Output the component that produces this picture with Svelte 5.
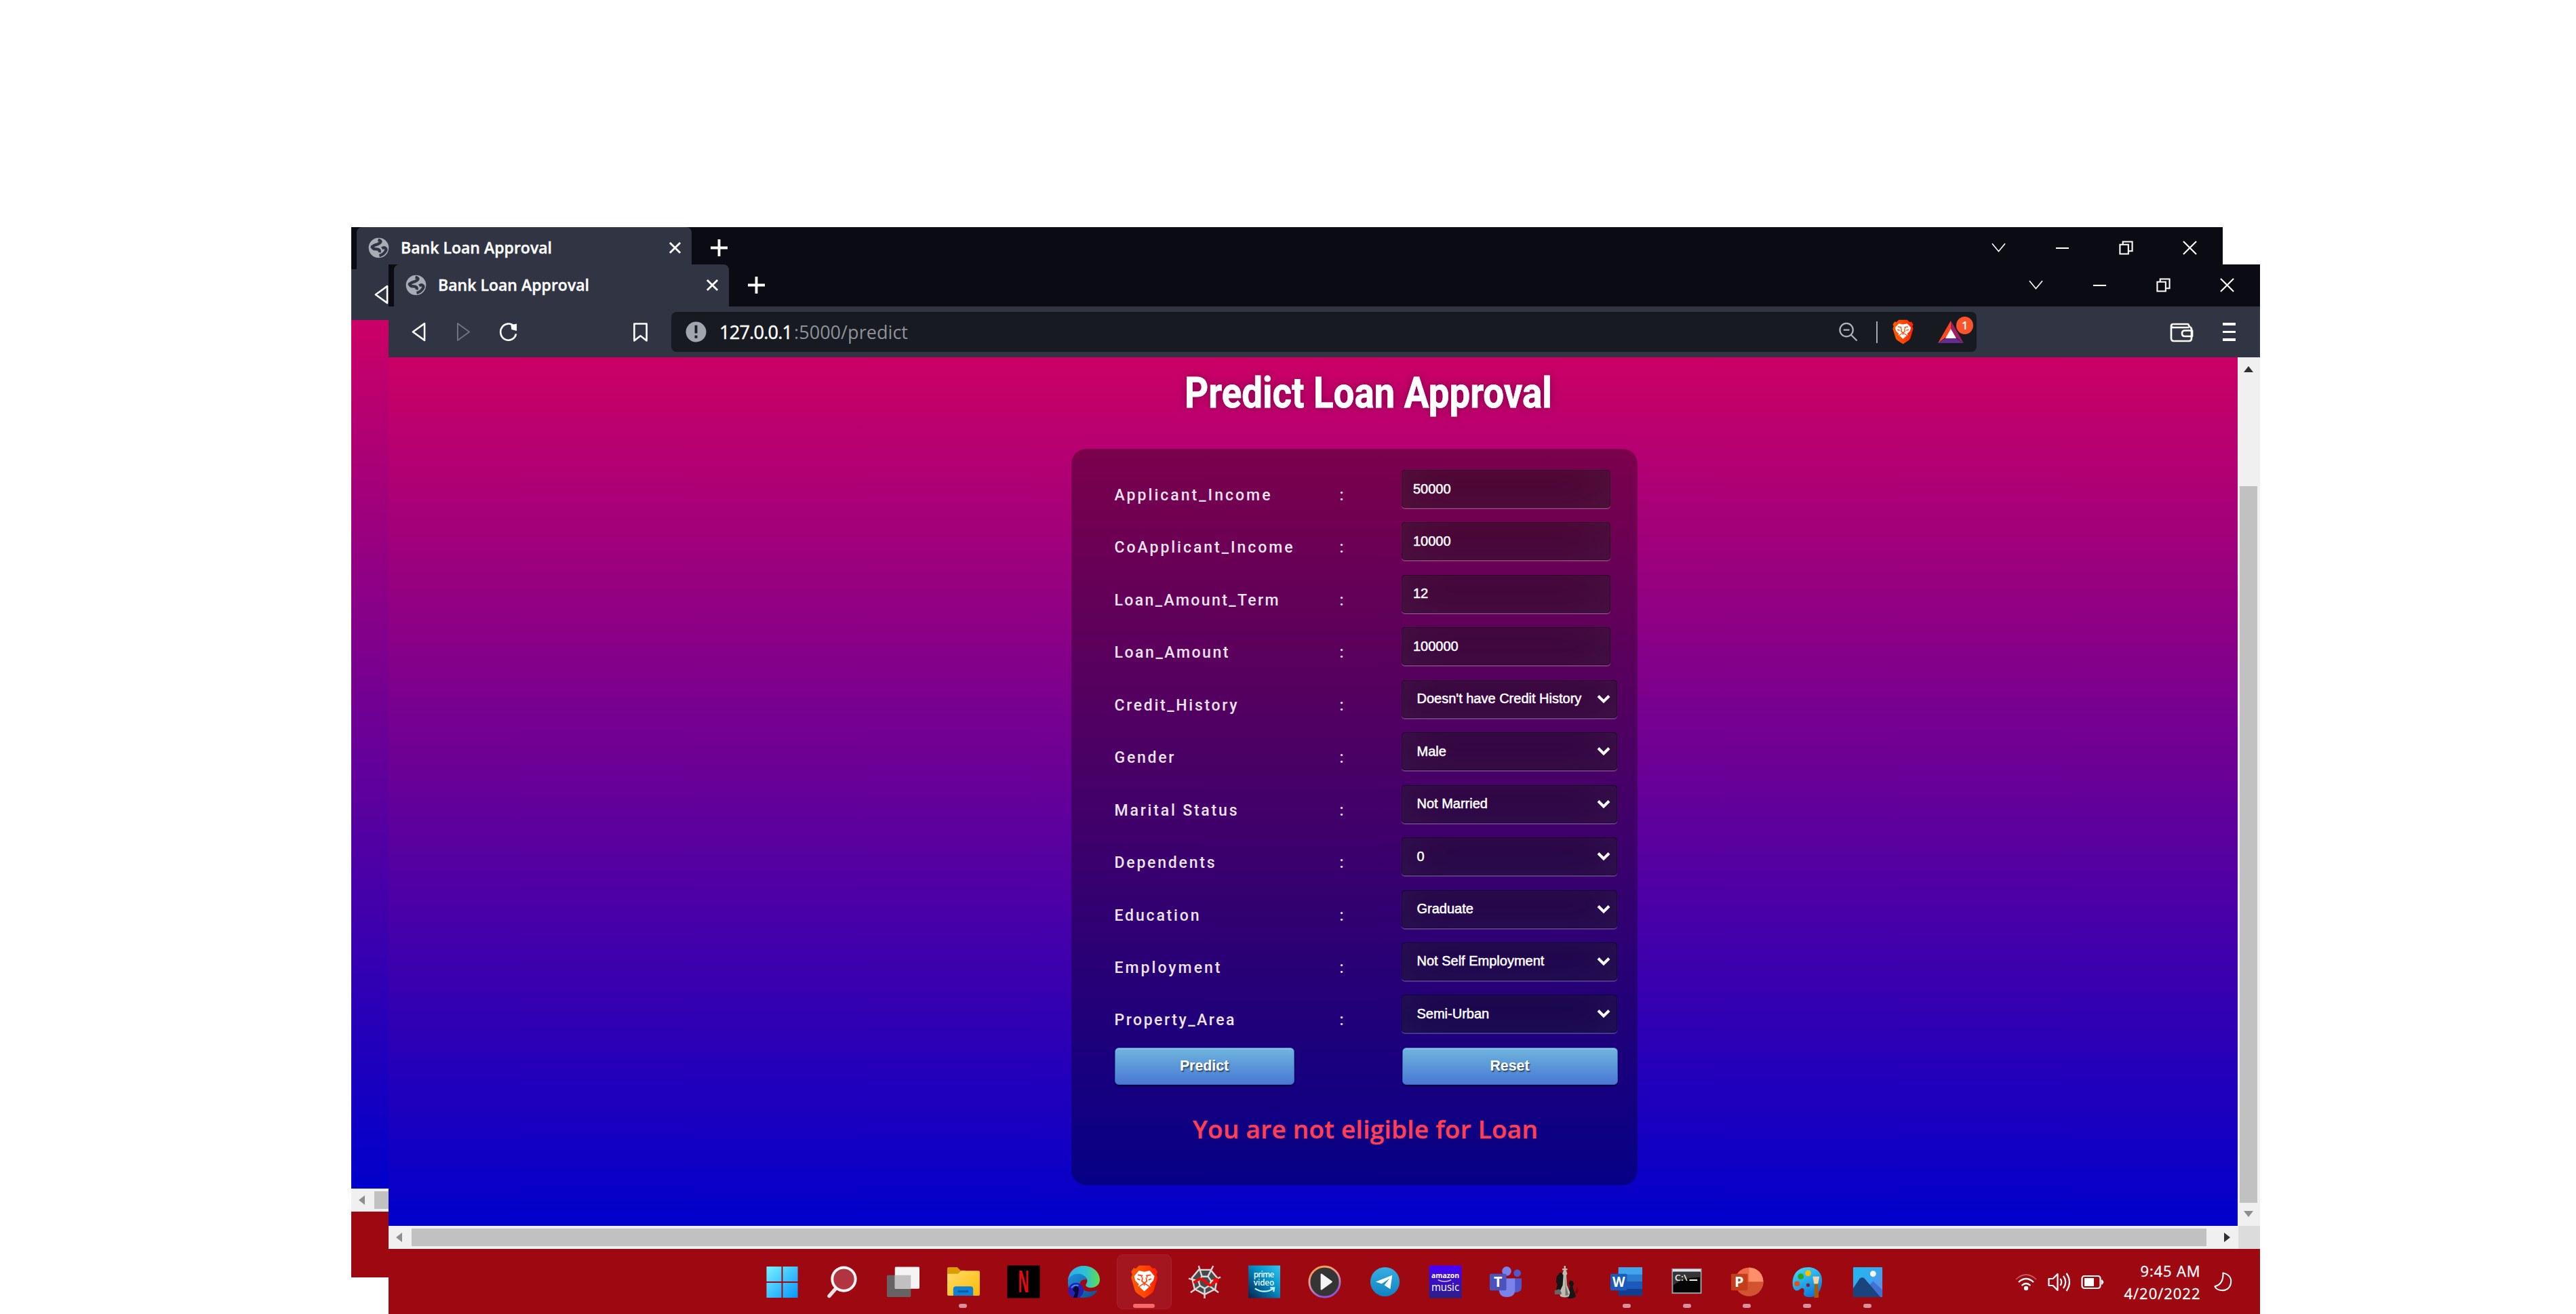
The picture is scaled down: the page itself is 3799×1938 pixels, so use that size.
<script>
  const inputs = [
    { label: 'Applicant_Income', width: 230, value: '50000' },
    { label: 'CoApplicant_Income', width: 263, value: '10000' },
    { label: 'Loan_Amount_Term', width: 242, value: '12' },
    { label: 'Loan_Amount', width: 168, value: '100000' },
    { label: 'Credit_History', width: 181, value: "Doesn't have Credit History", select: true },
    { label: 'Gender', width: 88, value: 'Male', select: true },
    { label: 'Marital Status', width: 181, value: 'Not Married', select: true },
    { label: 'Dependents', width: 148, value: '0', select: true },
    { label: 'Education', width: 125, value: 'Graduate', select: true },
    { label: 'Employment', width: 156, value: 'Not Self Employment', select: true },
    { label: 'Property_Area', width: 177, value: 'Semi-Urban', select: true }
  ];

  const apps = [
    { name: 'start' }, { name: 'search' }, { name: 'taskview' },
    { name: 'files', open: true }, { name: 'netflix' }, { name: 'edge' },
    { name: 'brave', active: true }, { name: 'spyder' }, { name: 'prime' },
    { name: 'player' }, { name: 'telegram' }, { name: 'music' },
    { name: 'teams' }, { name: 'chess' }, { name: 'word', open: true },
    { name: 'terminal', open: true }, { name: 'powerpoint', open: true },
    { name: 'paint', open: true }, { name: 'photos', open: true }
  ];

  // Tracks a line of text out to the given width, leaving no space after its last letter.
  function track(node, width) {
    const current = node.getBoundingClientRect().width;
    const spacing = (width - current) / (node.textContent.length - 1);
    node.style.letterSpacing = `${spacing}px`;
    node.style.marginRight = `${-spacing}px`;
  }

  // Condenses a line of text to the given width.
  function condense(node, width) {
    node.style.transform = `scaleX(${width / node.offsetWidth})`;
  }
</script>

{#snippet lion(id)}
  <defs>
    <linearGradient id={id}><stop offset="0" stop-color="#ff5a00" /><stop offset=".45" stop-color="#ff4a05" /><stop offset="1" stop-color="#ff1f00" /></linearGradient>
  </defs>
  <path fill="url(#{id})" d="M15 1h18l5 5 4-1 4 6-2 4 2 5-6 20c-1 3-3 4-5 6l-11 7-11-7c-2-2-4-3-5-6L2 20l2-5-2-4 4-6 4 1z" />
  <path fill="#fff" d="M15 9l9 2 9-2 8 9-2 7-6 6 2 4-11-7-11 7 2-4-6-6-2-7z" />
  <path fill="#fff" d="M24 30l8 5-8 7-8-7z" />
  <path fill="none" stroke="#ff4a10" stroke-width="2" d="M13 16l7 1-1 3m16-4l-7 1 1 3M12 22l5 2m19-2l-5 2M21 20l-1 6 4 3 4-3-1-6M24 29v4" />
{/snippet}

{#snippet titlebar()}
  <div class="titlebar">
    <div class="tab">
      <svg class="globe" viewBox="0 0 32 32"><circle cx="16" cy="16" r="15.3" fill="#a8adb5" /><path d="M15 4c5 1 5 3 2 5-4 3-7 2-9 4-3 3 0 5 4 5 5 0 6 2 5 5M21 17c4-3 7 0 6 3-2 4-6 7-10 8" fill="none" stroke="#303443" stroke-width="4.5" stroke-linejoin="round" /><path d="M4 14l4 1" stroke="#303443" stroke-width="4" /></svg>
      <span class="tab-title"><span use:track={223}>Bank Loan Approval</span></span>
      <svg class="close" viewBox="0 0 20 20"><path d="M2 2l16 16M18 2L2 18" /></svg>
    </div>
    <svg class="plus" viewBox="0 0 26 26"><path d="M13 0v26M0 13h26" /></svg>
    <div class="controls">
      <svg viewBox="0 0 22 22"><path class="thin" d="M1 4.500l10 12 10-12" /></svg>
      <svg viewBox="0 0 22 22"><path d="M1 11.500h20" /></svg>
      <svg viewBox="0 0 22 22"><path d="M1.500 6h13v14.500h-13zM6 6V1.500h14.500v14.500h-6" /></svg>
      <svg viewBox="0 0 22 22"><path d="M1 1l20 20M21 1L1 21" /></svg>
    </div>
  </div>
{/snippet}

{#snippet backIcon()}
  <svg class="back-icon" viewBox="0 0 22 30"><path d="M20 2v26L2 15z" /></svg>
{/snippet}

{#snippet appIcon(name)}
  <svg class="app-icon" viewBox="0 0 50 50">
    {#if name === 'start'}
      <defs><linearGradient id="win" x2="47" y2="47" gradientUnits="userSpaceOnUse"><stop stop-color="#7df5ff" /><stop offset="1" stop-color="#0a98ff" /></linearGradient></defs>
      <path fill="url(#win)" d="M1.500 2h22.500v22.500H1.500zM26 2h22.500v22.500H26zM1.500 26.500h22.500v22.500H1.500zM26 26.500h22.500V49H26z" />
    {:else if name === 'search'}
      <path d="M15.500 34.500L5 46.500" stroke="#e4e4e4" stroke-width="5.500" stroke-linecap="round" />
      <circle cx="27" cy="21" r="17.500" fill="#b13540" stroke="#f8f6f6" stroke-width="4" />
    {:else if name === 'taskview'}
      <rect x="1" y="15" width="36" height="33" rx="1.500" fill="#676263" />
      <rect x="13" y="2.500" width="37" height="33" rx="1.500" fill="#f4f4f4" />
      <path d="M13 15h24v20.500H13z" fill="#c1bfc0" />
    {:else if name === 'files'}
      <defs><linearGradient id="fold" x2="1" y2="1"><stop stop-color="#ffdc6c" /><stop offset="1" stop-color="#fdb900" /></linearGradient></defs>
      <path d="M1 15V5q0-2 2-2h13l5 5h7v8z" fill="#dd9c00" />
      <path d="M1 13h16l5-4.500h26q2 0 2 2V44q0 2-2 2H3q-2 0-2-2z" fill="url(#fold)" />
      <path d="M10 46V36q0-4 4-4h22q4 0 4 4v10z" fill="#1180d4" /><path d="M17 39.500h16" stroke="#0a5ca9" stroke-width="3" />
    {:else if name === 'netflix'}
      <rect x=".5" y=".5" width="49" height="49" fill="#000" />
      <text x="25" y="41" text-anchor="middle" textLength="17" lengthAdjust="spacingAndGlyphs" font-size="45" font-weight="700" fill="#e50914">N</text>
    {:else if name === 'edge'}
      <defs>
        <linearGradient id="edgeTop"><stop stop-color="#36a9ec" /><stop offset=".55" stop-color="#2bc2d1" /><stop offset="1" stop-color="#63dd4b" /></linearGradient>
        <linearGradient id="edgeLow" x2="1" y2="1"><stop stop-color="#1a94e2" /><stop offset="1" stop-color="#114a8b" /></linearGradient>
      </defs>
      <path d="M1 24C2 9 12 1 25 1c14 0 24 10 24 21 0 8-7 12-13 12-6 0-9-3-8-5 6-8-2-14-11-15C9 13 4 17 1 24z" fill="url(#edgeTop)" />
      <path d="M1 24c2-8 9-11 15-11 8 0 13 5 13 9-8-2-12 4-9 10 4 8 13 10 26 5-5 9-12 12-21 12C10 49 0 39 1 24z" fill="url(#edgeLow)" />
      <circle cx="13" cy="38" r="11.500" fill="#2a1fb5" /><path d="M12 31q7 1 5 9l-2 9h-6l3-8-4-4z" fill="#080b30" /><path d="M6 34q5-6 11-3" stroke="#398ff2" stroke-width="2" fill="none" />
    {:else if name === 'brave'}
      <g transform="translate(3.500 -.5) scale(.9 .95)">{@render lion('lionTask')}</g>
    {:else if name === 'spyder'}
      <path d="M16 8l18 0 11 12-3 16-17 9-15-9-4-16z" fill="#48494b" />
      <g fill="none" stroke="#d9d9d9" stroke-width="2.500"><path d="M16 7h18l10 12-3 17-16 8-15-8-4-17zM21 17h9l5 7-3 7-7 4-7-4-2-7z" /><path d="M16 1l5 16M38 1l-8 16M49 18l-14 6M46 41l-14-10M25 50V35M4 41l14-10M1 20l15 4" /></g>
      <path d="M9 27q9-10 15-4t9 7 8-7" fill="none" stroke="#f10505" stroke-width="4" /><circle cx="42" cy="23" r="4" fill="#f10505" />
    {:else if name === 'prime'}
      <defs><linearGradient id="primeBg" x1="1" x2="0" y2="1"><stop stop-color="#31c5f1" /><stop offset=".4" stop-color="#0494cc" /><stop offset="1" stop-color="#03234e" /></linearGradient></defs>
      <rect x="1" y=".5" width="48" height="49" fill="url(#primeBg)" />
      <g fill="#e8faff" font-size="12" font-weight="600"><text x="9" y="18.500" textLength="31">prime</text><text x="9" y="31" textLength="31">video</text></g>
      <path d="M11 35q14 9 28 0m-5-1l6 0-1 6" fill="none" stroke="#c9f2fc" stroke-width="2.200" />
    {:else if name === 'player'}
      <defs><linearGradient id="ring" x2=".4" y2="1"><stop stop-color="#ff9a3c" /><stop offset=".5" stop-color="#e69899" /><stop offset="1" stop-color="#8b58d4" /></linearGradient></defs>
      <circle cx="25" cy="25" r="23" fill="#353535" stroke="url(#ring)" stroke-width="3" /><path d="M19 14v22q0 2 2 1l15-11q1-1 0-2L21 13q-2-1-2 1z" fill="#f6f6f6" />
    {:else if name === 'telegram'}
      <defs><linearGradient id="tg" x2="0" y2="1"><stop stop-color="#38aee5" /><stop offset="1" stop-color="#0e83c1" /></linearGradient></defs>
      <circle cx="25" cy="25" r="22" fill="url(#tg)" /><path d="M11 25l25-10-3 21-9-6 8-10-12 8z" fill="#fff" />
    {:else if name === 'music'}
      <defs><linearGradient id="am" x2="0" y2="1"><stop stop-color="#4700ff" /><stop offset="1" stop-color="#2b1f84" /></linearGradient></defs>
      <rect x=".5" y=".5" width="49" height="49" fill="url(#am)" /><text x="4" y="19" textLength="42" lengthAdjust="spacingAndGlyphs" font-size="11.500" font-weight="700" fill="#fff">amazon</text><path d="M14 22q10 5 20 0" fill="none" stroke="#d5ccff" stroke-width="1.500" /><text x="4" y="39" textLength="42" lengthAdjust="spacingAndGlyphs" font-size="17" fill="#fff">music</text>
    {:else if name === 'teams'}
      <circle cx="26.500" cy="9" r="7" fill="#7b83eb" /><circle cx="42.500" cy="12" r="5.500" fill="#5059c9" /><path d="M34 20h15v13q0 8-9 8h-6z" fill="#5059c9" /><path d="M16 20h23v17q0 11-12 11-11 0-12-10z" fill="#7b83eb" />
      <rect x="1" y="13" width="25" height="25" rx="1.500" fill="#4b53bc" /><text x="13.500" y="33" text-anchor="middle" font-size="22" font-weight="700" fill="#fff">T</text>
    {:else if name === 'chess'}
      <path d="M28 47q20-2 14-14l-4 8z" fill="#000" opacity=".25" />
      <path d="M9 42l3-13-2-4 1-8 5-6 4 1 3 8-1 22zM28 46l3-15-2-4 2-4 4 1 2 4-2 4 3 10 2 5q-4 4-12 3z" fill="#161616" />
      <path d="M22 1h2.500v4h2.500v2.500h-2l2 5.500-1.500 2 1 15 4.500 11-1.500 6q-6.500 3-13 0l-1.500-6 5-11 1-15-1.500-2 2-5.500h-2V5h2.500z" fill="#bdbdb4" />
      <path d="M24 14l1 18 4 13-5 1z" fill="#77776f" /><path d="M8 38l7-2 3 5v3H8z" fill="#666" />
    {:else if name === 'word'}
      <path d="M13 3h36v12H13z" fill="#41a5ee" /><path d="M13 14h36v11H13z" fill="#2b7cd3" /><path d="M13 25h36v11H13z" fill="#185abd" /><path d="M13 36h36v10H13z" fill="#103f91" /><rect x="1" y="13" width="25" height="25" rx="1.500" fill="#185abd" /><text x="13.500" y="33" text-anchor="middle" textLength="19" lengthAdjust="spacingAndGlyphs" font-size="22" font-weight="700" fill="#fff">W</text>
    {:else if name === 'terminal'}
      <rect x="3.500" y="6" width="43" height="36" fill="#050505" stroke="#9ba0a4" stroke-width="2" /><path d="M4 6h42v4H4z" fill="#dce3ea" /><path d="M5 10h40v8Q20 18 5 30z" fill="#353535" /><text x="7" y="23" textLength="19" lengthAdjust="spacingAndGlyphs" font-size="13" font-weight="600" fill="#eee">C:\</text><path d="M29 22.500h12" stroke="#fff" stroke-width="2" />
    {:else if name === 'powerpoint'}
      <circle cx="28" cy="25" r="21.500" fill="#ed6c47" /><path d="M28 3.500A21.500 21.500 0 0 1 49.500 25H28z" fill="#ff8f6b" /><path d="M6.500 25h43a21.500 21.500 0 0 1-43 0z" fill="#d35230" /><rect x="1" y="13" width="25" height="25" rx="1.500" fill="#c43e1c" /><text x="13" y="33" text-anchor="middle" font-size="22" font-weight="700" fill="#fff">P</text>
    {:else if name === 'paint'}
      <defs><linearGradient id="pal" x2=".5" y2="1"><stop stop-color="#45e2f8" /><stop offset="1" stop-color="#0d7ddc" /></linearGradient></defs>
      <path d="M26 3c14 0 22 10 21 22-1 14-8 23-18 23-8 0-11-3-9-8 1-5-2-7-6-4-4 4-9 3-11-5C1 15 10 3 26 3z" fill="url(#pal)" /><circle cx="15" cy="17" r="4.500" fill="#27a61e" /><circle cx="26" cy="12" r="4.500" fill="#fac000" /><circle cx="9.500" cy="28" r="4" fill="#e54f1b" /><circle cx="26" cy="30" r="2.700" fill="#70204d" /><path d="M36 26h5l1 23h-7z" fill="#a65c0c" /><path d="M33 17h10l-2 11h-6z" fill="#f4d4a5" />
    {:else}
      <defs><linearGradient id="sky" x2="1" y2="1"><stop stop-color="#20b8f3" /><stop offset=".5" stop-color="#37a7ee" /><stop offset="1" stop-color="#7b7fe0" /></linearGradient></defs>
      <rect x="3" y="3" width="44" height="45" rx="1" fill="url(#sky)" /><path d="M24 34l9-10 14 13v11H30z" fill="#4071d6" /><path d="M3 35l10-15q4-3 7 0l24 28H3z" fill="#194480" /><circle cx="33" cy="13" r="4.500" fill="#fff" />
    {/if}
  </svg>
{/snippet}

<main>
  <section class="window rear">
    {@render titlebar()}
    <div class="toolbar">{@render backIcon()}</div>
    <div class="page"></div>
    <div class="hscroll"><i class="arrow left"></i><div class="hthumb"></div></div>
    <div class="taskbar"></div>
  </section>

  <section class="window front">
    {@render titlebar()}
    <div class="toolbar">
      {@render backIcon()}
      <svg class="forward-icon" viewBox="0 0 22 30"><path d="M2 2v26l18-13z" /></svg>
      <svg class="reload" viewBox="0 0 30 30"><path d="M24 6.500A12 12.500 0 1 0 27 18" /><path class="solid" d="M19 4.500l9-2v11l-8-2z" /></svg>
      <svg class="bookmark" viewBox="0 0 24 30"><path d="M2.500 2h19v26L12 20.500 2.500 28z" /></svg>
      <div class="address">
        <svg class="info" viewBox="0 0 32 32"><circle cx="16" cy="16" r="15.500" fill="#a0a6ae" /><path d="M16 6v12M16 21.500v4" stroke="#1a1d23" stroke-width="4" /></svg>
        <p class="url"><span use:track={108}>127.0.0.1</span><span class="path" use:track={168}>:5000/predict</span></p>
        <svg class="zoom-icon" viewBox="0 0 30 30"><circle cx="12.500" cy="12" r="10" /><path d="M20 20l8.500 8.500M8 12h9" /></svg>
        <i class="divider"></i>
        <svg class="shield" viewBox="0 0 48 54">{@render lion('lionBar')}</svg>
        <div class="rewards">
          <svg viewBox="0 0 38 33"><path d="M19 0L0 33l19-14z" fill="#ff4724" /><path d="M19 0l19 33-19-14z" fill="#9e1f63" /><path d="M0 33h38L19 21z" fill="#662d91" /><path d="M19 12l8 14H11z" fill="#fff" /></svg>
          <b>1</b>
        </div>
      </div>
      <svg class="wallet" viewBox="0 0 36 30"><path d="M3 6v18q0 4 4 4h22q4 0 4-4V11q0-3-3-4l-2-4H6q-3 0-3 3 0 2 4 2h22M34 12.500H23q-4 0-4 4.200t4 4.300h11z" /></svg>
      <div class="menu"><i></i><i></i><i></i></div>
    </div>

    <div class="viewport">
      <div class="page">
        <h1><span use:condense={542}>Predict Loan Approval</span></h1>
        <form class="card">
          {#each inputs as row}
            <div class="row">
              <div class="label"><span use:track={row.width}>{row.label}</span></div>
              <div class="colon">:</div>
              <div class="field" class:select={row.select}>
                <span>{row.value}</span>
                {#if row.select}<svg viewBox="0 0 20 14"><path d="M2 2.500l8 8 8-8" /></svg>{/if}
              </div>
            </div>
          {/each}
          <div class="buttons">
            <button type="button" class="predict">Predict</button>
            <button type="button" class="reset">Reset</button>
          </div>
          <p class="message"><span use:track={509}>You are not eligible for Loan</span></p>
        </form>
      </div>
      <div class="vscroll"><i class="arrow up"></i><div class="vthumb"></div><i class="arrow down"></i></div>
    </div>
    <div class="hscroll"><i class="arrow left"></i><div class="hthumb"></div><i class="arrow right"></i><div class="corner"></div></div>

    <div class="taskbar">
      <div class="apps">
        {#each apps as app}
          <div class="app" class:active={app.active} class:open={app.open}>{@render appIcon(app.name)}</div>
        {/each}
      </div>
      <div class="tray">
        <svg class="wifi" viewBox="0 0 34 30"><path class="faint" d="M2 11q15-14 30 0" /><path d="M6 15q11-10 22 0M10.500 20q6.500-6 13 0" /><circle cx="17" cy="24" r="3.200" /></svg>
        <svg class="volume" viewBox="0 0 34 30"><path d="M1.500 10h6l7-7v24l-7-7h-6zM18.500 10q3.500 5 0 10M23 6q6.500 9 0 18M27.500 2q9 13 0 26" /></svg>
        <svg class="battery" viewBox="0 0 34 22"><rect x="1.500" y="2" width="27" height="18" rx="3.500" /><path class="fill" d="M5 5h14v12H5zM30 7.500h1.500l2 3.500-2 3.500H30z" /></svg>
        <div class="clock"><span use:track={88}>9:45 AM</span><span use:track={112}>4/20/2022</span></div>
        <svg class="moon" viewBox="0 0 28 30"><path d="M14 1.500c9 2 13 8 12 15-1 8-7 12-14 11.500-5 0-9-2-10.500-6 8-2 13-9 12.500-20.500z" /></svg>
      </div>
    </div>
  </section>
</main>

<style>
  :global(body) { background: #fff; overflow: hidden; }
  main { position: relative; width: 3799px; height: 1938px; overflow: hidden; background: #fff; font-family: "Open Sans", "Noto Sans", sans-serif; }
  svg { display: block; flex: none; overflow: visible; }
  span { display: inline-block; white-space: nowrap; }
  p, h1 { margin: 0; }

  .window { position: absolute; width: 2760px; height: 1549px; display: flex; flex-direction: column; overflow: hidden; }
  .rear { left: 517.500px; top: 334.500px; }
  .front { left: 572.500px; top: 389.500px; }

  .titlebar { height: 62.500px; flex: none; display: flex; align-items: center; padding-left: 8px; background: #0b0b14; }
  .tab { width: 494px; height: 100%; box-sizing: border-box; display: flex; align-items: center; padding: 0 15px 0 17px; border-radius: 8px 8px 0 0; background: #303443; }
  .globe { width: 31px; height: 31px; }
  .tab-title { flex: 1; margin-left: 17.500px; padding-bottom: 2px; color: #fff; font-size: 23px; font-weight: 600; line-height: 58px; -webkit-text-stroke: .4px #fff; }
  .close { width: 19px; height: 19px; }
  .close path { fill: none; stroke: #fff; stroke-width: 3; }
  .plus { width: 25px; height: 25px; margin-left: 28.500px; }
  .plus path { fill: none; stroke: #fff; stroke-width: 4; }
  .controls { flex: 1; display: flex; justify-content: flex-end; gap: 73px; padding-right: 38px; }
  .controls svg { width: 21px; height: 21px; }
  .controls path { fill: none; stroke: #fff; stroke-width: 2.200; }
  .controls .thin { stroke-width: 1.700; }

  .toolbar { height: 75px; flex: none; display: flex; align-items: center; padding-left: 34px; background: #303443; }
  .toolbar > svg path { fill: none; stroke: #fff; stroke-width: 2.700; stroke-linejoin: round; }
  .back-icon { width: 21px; height: 29px; }
  .forward-icon { width: 21px; height: 29px; margin-left: 45px; }
  .toolbar .forward-icon path { stroke: #737681; stroke-width: 2; }
  .reload { width: 29px; height: 29px; margin-left: 41px; }
  .toolbar .reload .solid { fill: #fff; stroke: none; }
  .bookmark { width: 23px; height: 30px; margin-left: 169px; }
  .address { width: 1925px; height: 59px; box-sizing: border-box; margin-left: 34.500px; padding-left: 21px; display: flex; align-items: center; border-radius: 8px; background: #171a21; }
  .info { width: 31px; height: 31px; }
  .url { flex: 1; margin-left: 19px; color: #fff; font-size: 27px; line-height: 56px; white-space: nowrap; }
  .url span:first-child { -webkit-text-stroke: .5px #fff; }
  .path { color: #8f9299; margin-left: 2px; }
  .zoom-icon { width: 29px; height: 29px; }
  .zoom-icon circle, .zoom-icon path { fill: none; stroke: #b1b3b9; stroke-width: 2.300; }
  .divider { width: 2px; height: 32px; margin-left: 27px; background: #a5a7ac; }
  .shield { width: 33px; height: 39px; margin-left: 21px; }
  .rewards { position: relative; margin: 0 19px 0 35px; }
  .rewards svg { width: 38px; height: 33px; }
  .rewards b { position: absolute; left: 27px; top: -6px; width: 25px; height: 26px; border-radius: 50%; background: #fb542b; color: #fff; font-size: 17px; font-weight: 600; line-height: 25px; text-align: center; }
  .wallet { width: 36px; height: 30px; margin-left: 284px; }
  .menu { display: flex; flex-direction: column; gap: 8px; margin-left: 43px; }
  .menu i { width: 19px; height: 3.500px; background: #fff; }

  .viewport { height: 1280.500px; flex: none; display: flex; }
  .page { width: 2727px; height: 1280.500px; flex: none; background: linear-gradient(#cc0066, #0000cc); }
  .rear .page { width: 2760px; }
  h1 { height: 135px; padding-left: 1174.500px; box-sizing: border-box; color: #fff; font: 700 62.500px/105px Roboto, sans-serif; text-shadow: 0 0 14px rgb(0 0 0 / .35); -webkit-text-stroke: .8px #fff; }
  h1 span { transform-origin: left; }
  .card { width: 835px; height: 1085.500px; box-sizing: border-box; margin-left: 1007.500px; padding: 31px 0 0 63.500px; border-radius: 22px; background: rgb(0 0 0 / .32); }
  .row { height: 77.450px; display: grid; grid-template-columns: 330px 93.500px auto; justify-content: start; align-items: start; }
  .label, .colon { color: #eee4f0; font: 500 23px/75px Roboto, sans-serif; }
  .colon { padding-left: 2px; }
  .field { width: 308px; height: 56px; box-sizing: border-box; padding-left: 16px; display: flex; align-items: center; border: 1.500px solid rgb(0 0 0 / .4); border-radius: 5px; background: rgb(0 0 0 / .35); box-shadow: inset 0 -7px 64px rgb(100 100 100 / .2), 0 2px 1px rgb(255 255 255 / .22); color: #fff; font: 20px/51px "Liberation Sans", Arial, sans-serif; -webkit-text-stroke: .5px #fff; }
  .select { width: 318px; padding: 0 9px 0 21.500px; justify-content: space-between; }
  .field svg { width: 20px; height: 14px; }
  .field path { fill: none; stroke: #fff; stroke-width: 4; }
  .buttons { display: flex; gap: 159px; }
  button { height: 55.500px; padding: 0; border: 1.500px solid #3762bc; border-radius: 6px; background: linear-gradient(#6eb6de, #4a77d4); box-shadow: inset 0 1.500px 0 rgb(255 255 255 / .25), 0 1.500px 2px rgb(0 0 0 / .5); color: #fff; font: 700 21.300px "Liberation Sans", Arial, sans-serif; text-shadow: 1.500px 1.500px 1.500px rgb(0 0 0 / .5); }
  .predict { width: 265px; }
  .reset { width: 318px; }
  .message { margin: 34.500px 0 0 115.500px; color: #ff3f52; font-size: 36.900px; font-weight: 600; line-height: 60px; -webkit-text-stroke: .4px #ff3f52; }

  .vscroll { width: 33px; display: flex; flex-direction: column; align-items: center; background: #f0f0f0; }
  .vthumb { width: 26px; height: 1057px; margin-top: 168px; background: #c1c1c1; }
  .hscroll { height: 34px; flex: none; display: flex; align-items: center; background: #f0f0f0; }
  .hthumb { width: 2647px; height: 26px; margin-left: 14px; flex: none; background: #c1c1c1; }
  .corner { width: 33px; height: 34px; margin-left: 12px; background: #dcdcdc; }
  .arrow { width: 0; height: 0; flex: none; border: 7px solid transparent; }
  .left { margin-left: 11px; border-right: 9px solid #8e8e8e; border-left: 0; }
  .right { margin-left: 26px; border-left: 9px solid #303030; border-right: 0; }
  .up { margin-top: 13px; border-bottom: 9px solid #303030; border-top: 0; }
  .down { margin-top: 12px; border-top: 9px solid #8e8e8e; border-bottom: 0; }

  .taskbar { height: 97px; flex: none; display: flex; justify-content: space-between; box-sizing: border-box; padding: 1px 41px 0 536.500px; background: #9e0911; }
  .apps { display: flex; }
  .app { width: 88.950px; height: 96px; display: flex; align-items: center; justify-content: center; position: relative; }
  .active::before { content: ""; position: absolute; inset: 7px 4px 8px; border: 1px solid #a9212b; border-radius: 9px; background: #a3161f; }
  .app-icon { position: relative; width: 49px; height: 49px; }
  .open::after, .active::after { content: ""; position: absolute; left: 50%; bottom: 9.500px; width: 12px; height: 6px; margin-left: -6px; border-radius: 3px; background: #d8909a; }
  .active::after { width: 32px; margin-left: -16px; background: #f96a67; }
  .tray { display: flex; align-items: center; }
  .tray path, .tray rect { fill: none; stroke: #fff; stroke-width: 2.200; stroke-linejoin: round; }
  .tray circle, .tray .fill { fill: #fff; stroke: none; }
  .tray .faint { stroke: #c45a60; stroke-width: 1.700; }
  .wifi { width: 34px; height: 30px; }
  .volume { width: 34px; height: 30px; margin-left: 15px; }
  .battery { width: 34px; height: 22px; margin-left: 15px; }
  .clock { width: 142px; display: flex; flex-direction: column; align-items: flex-end; color: #fff; font-size: 22px; line-height: 32.500px; -webkit-text-stroke: .3px #fff; }
  .moon { width: 27px; height: 29px; margin-left: 20px; }
</style>
